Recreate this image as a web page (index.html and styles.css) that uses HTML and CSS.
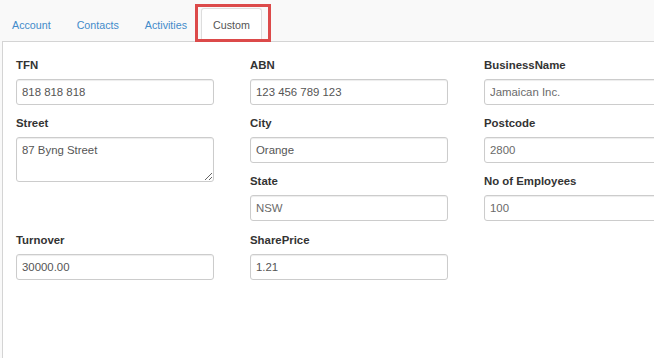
FILE: index.html
```html
<!DOCTYPE html>
<html>
<head>
<meta charset="utf-8">
<link rel="stylesheet" href="styles.css">
</head>
<body>
<div class="page">
  <ul class="tabs">
    <li class="tab"><a class="tab-link">Account</a></li>
    <li class="tab"><a class="tab-link">Contacts</a></li>
    <li class="tab"><a class="tab-link">Activities</a></li>
    <li class="tab active"><a class="tab-link">Custom</a></li>
  </ul>
  <div class="panel">
    <form class="grid">
      <div class="group"><label class="lbl">TFN</label><input class="field" value="818 818 818"></div>
      <div class="group"><label class="lbl">ABN</label><input class="field" value="123 456 789 123"></div>
      <div class="group"><label class="lbl">BusinessName</label><input class="field light" value="Jamaican Inc."></div>
      <div class="group street"><label class="lbl">Street</label><textarea class="field area">87 Byng Street</textarea></div>
      <div class="group"><label class="lbl">City</label><input class="field" value="Orange"></div>
      <div class="group"><label class="lbl">Postcode</label><input class="field light" value="2800"></div>
      <div class="group"><label class="lbl">State</label><input class="field light" value="NSW"></div>
      <div class="group"><label class="lbl">No of Employees</label><input class="field light" value="100"></div>
      <div class="group last"><label class="lbl">Turnover</label><input class="field" value="30000.00"></div>
      <div class="group last"><label class="lbl">SharePrice</label><input class="field" value="1.21"></div>
    </form>
  </div>
</div>
</body>
</html>
```

FILE: styles.css
```css
html, body {
  margin: 0;
  padding: 0;
  overflow: hidden;
  background: #f9f9f9;
  font-family: "Liberation Sans", Arial, sans-serif;
}

.page {
  width: 654px;
  height: 358px;
  overflow: hidden;
}

.tabs {
  list-style: none;
  margin: 0;
  padding: 8px 0 0 0;
  display: flex;
}

.tab {
  position: relative;
  margin-right: 2px;
  margin-bottom: -1px;
}

.tab-link {
  display: block;
  padding: 8px 11px;
  line-height: 16px;
  font-size: 10.7px;
  color: #428bca;
  border: 1px solid transparent;
  border-radius: 3px 3px 0 0;
}

.tab.active .tab-link {
  color: #555;
  background: #fff;
  border-color: #ddd #ddd #fff #ddd;
}

.tab.active::after {
  content: "";
  position: absolute;
  top: -4px;
  bottom: 0;
  left: -6px;
  right: -9px;
  border: 3px solid #dc4a4a;
}

.panel {
  margin-left: 2px;
  background: #fff;
  border-top: 1px solid #d4d4d4;
  border-left: 1px solid #d4d4d4;
  padding: 15px 0 0 13px;
  min-height: 400px;
}

.grid {
  display: grid;
  grid-template-columns: 198px 198px 198px;
  column-gap: 36px;
  row-gap: 10px;
  margin: 0;
}

.street {
  grid-row: span 2;
}

.last {
  padding-top: 1px;
}

.lbl {
  display: block;
  font-size: 11.4px;
  font-weight: bold;
  line-height: 16px;
  color: #333;
  margin-bottom: 6px;
}

.field {
  display: block;
  box-sizing: border-box;
  width: 198px;
  height: 26px;
  margin: 0;
  padding: 0 5px;
  border: 1px solid #ccc;
  border-radius: 3px;
  box-shadow: inset 0 1px 1px rgba(0, 0, 0, 0.075);
  background: #fff;
  font-family: "Liberation Sans", Arial, sans-serif;
  font-size: 11.4px;
  color: #555;
}

.field.light {
  color: #6a6a6a;
}

.area {
  height: 45px;
  padding: 4px 5px;
  line-height: 16px;
  resize: both;
}
```
